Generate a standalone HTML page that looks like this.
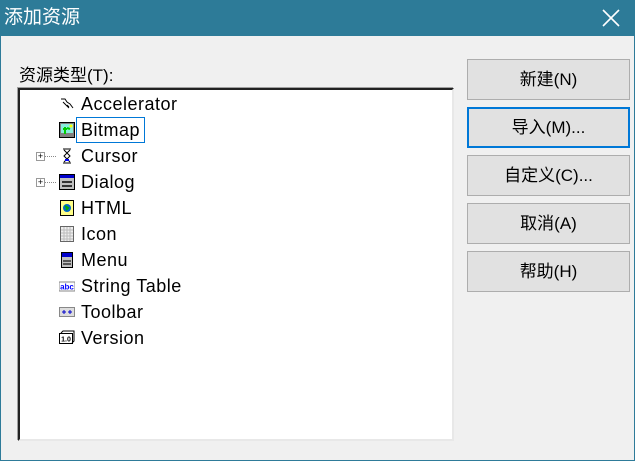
<!DOCTYPE html><html><head><meta charset="utf-8"><style>
*{margin:0;padding:0;box-sizing:border-box}
body{width:635px;height:461px;overflow:hidden;background:#f0f0f0;font-family:"Liberation Sans","Noto Sans CJK SC",sans-serif;position:relative}
.win{position:absolute;left:0;top:0;width:635px;height:461px;border:1px solid #2e7b99;border-top:none}
.title{position:absolute;left:0;top:0;width:635px;height:36px;background:#2d7b98;color:#fff;font-size:19px;line-height:36px;padding-left:4px}
.x{position:absolute;right:14px;top:8px}
.lbl{position:absolute;left:19px;top:61px;font-size:17px;color:#000}
.tree{position:absolute;left:18px;top:88px;width:436px;height:353px;background:#fff;border-top:2px solid #222;border-left:2px solid #222;border-right:2px solid #e8e8e8;border-bottom:2px solid #e8e8e8;box-shadow:-1px -1px 0 #a0a0a0}
.it{position:absolute;left:81px;font-size:18px;letter-spacing:0.5px;color:#000;height:24px;line-height:24px}
.ic{position:absolute;left:59px;width:16px;height:16px}
.sel{position:absolute;left:76px;top:117px;width:69px;height:26px;border:1px solid #0078d7}
.pb{position:absolute;left:36px;width:9px;height:9px;border:1px solid #999;background:#fff;font-size:9px;line-height:7px;text-align:center;color:#000}
.dl{position:absolute;left:45px;width:11px;border-top:1px dotted #888}
.btn{position:absolute;left:467px;width:163px;height:41px;background:#e1e1e1;border:1px solid #adadad;font-size:17px;text-align:center;line-height:39px;color:#000}
.foc{border:2px solid #0078d7;line-height:37px}
</style></head><body>
<div class="win"></div>
<div class="title">添加资源<svg class="x" width="20" height="20"><path d="M2 2L18 18M18 2L2 18" stroke="#fff" stroke-width="1.6"/></svg></div>
<div class="lbl">资源类型(T):</div>
<div class="tree"></div>
<div class="sel"></div>
<svg class="ic" style="top:96px" viewBox="0 0 16 16"><path d="M2 3h4l2 3 3 2 3 4M4 6l3 3M8 9l2 2M6 8l4 4" stroke="#000" fill="none"/></svg>
<div class="it" style="top:92px">Accelerator</div>
<svg class="ic" style="top:122px" viewBox="0 0 16 16"><rect x="0.5" y="0.5" width="15" height="15" fill="#808080" stroke="#000"/><rect x="2" y="2" width="12" height="9" fill="#8ed"/><path d="M6 12V5M4 7h4M8 6l3 1" stroke="#0c0" stroke-width="2"/><circle cx="12" cy="4" r="1.5" fill="#ff0"/></svg>
<div class="it" style="top:118px">Bitmap</div>
<div class="pb" style="top:152px">+</div><div class="dl" style="top:156px"></div>
<svg class="ic" style="top:148px" viewBox="0 0 16 16"><path d="M4 1h8M4 15h8M5 2l6 6-6 6M11 2L5 8l6 6" stroke="#000" fill="none"/><path d="M6 12h4" stroke="#00f" stroke-width="2"/></svg>
<div class="it" style="top:144px">Cursor</div>
<div class="pb" style="top:178px">+</div><div class="dl" style="top:182px"></div>
<svg class="ic" style="top:174px" viewBox="0 0 16 16"><rect x="0.5" y="0.5" width="15" height="15" fill="#c0c0c0" stroke="#000"/><rect x="1" y="1" width="14" height="3" fill="#00c"/><path d="M3 8h10M3 12h10" stroke="#333" stroke-width="2"/></svg>
<div class="it" style="top:170px">Dialog</div>
<svg class="ic" style="top:200px" viewBox="0 0 16 16"><rect x="1.5" y="0.5" width="13" height="15" fill="#ff8" stroke="#000"/><circle cx="8" cy="8" r="4" fill="#06c"/><path d="M6 6l3 2-2 2" stroke="#0a0" stroke-width="2" fill="none"/></svg>
<div class="it" style="top:196px">HTML</div>
<svg class="ic" style="top:226px" viewBox="0 0 16 16"><rect x="1.5" y="0.5" width="13" height="15" fill="#eee" stroke="#666"/><path d="M5 1v14M8 1v14M11 1v14M2 4h12M2 7h12M2 10h12M2 13h12" stroke="#bbb"/></svg>
<div class="it" style="top:222px">Icon</div>
<svg class="ic" style="top:252px" viewBox="0 0 16 16"><rect x="2.5" y="0.5" width="11" height="15" fill="#c0c0c0" stroke="#000"/><rect x="3" y="1" width="10" height="4" fill="#00c"/><path d="M4 9h8M4 12h8" stroke="#333" stroke-width="1.5"/></svg>
<div class="it" style="top:248px">Menu</div>
<svg class="ic" style="top:278px" viewBox="0 0 16 16"><rect x="0" y="4" width="16" height="9" fill="#fff" stroke="#888"/><text x="8" y="11.5" font-size="8" font-family="Liberation Sans" font-weight="bold" fill="#00f" text-anchor="middle">abc</text></svg>
<div class="it" style="top:274px">String Table</div>
<svg class="ic" style="top:304px" viewBox="0 0 16 16"><rect x="0.5" y="3.5" width="15" height="9" fill="#ddd" stroke="#888"/><path d="M3 8h4M5 6v4M9 8h4M11 6v4" stroke="#00c"/></svg>
<div class="it" style="top:300px">Toolbar</div>
<svg class="ic" style="top:330px" viewBox="0 0 16 16"><rect x="0.5" y="3.5" width="13" height="10" fill="#fff" stroke="#000"/><path d="M2 3l2-2h11v10l-2 2" stroke="#000" fill="none"/><text x="7" y="11.5" font-size="7" font-family="Liberation Sans" font-weight="bold" text-anchor="middle">1.0</text></svg>
<div class="it" style="top:326px">Version</div>
<div class="btn" style="top:59px">新建(N)</div>
<div class="btn foc" style="top:107px">导入(M)...</div>
<div class="btn" style="top:155px">自定义(C)...</div>
<div class="btn" style="top:203px">取消(A)</div>
<div class="btn" style="top:251px">帮助(H)</div>
</body></html>
